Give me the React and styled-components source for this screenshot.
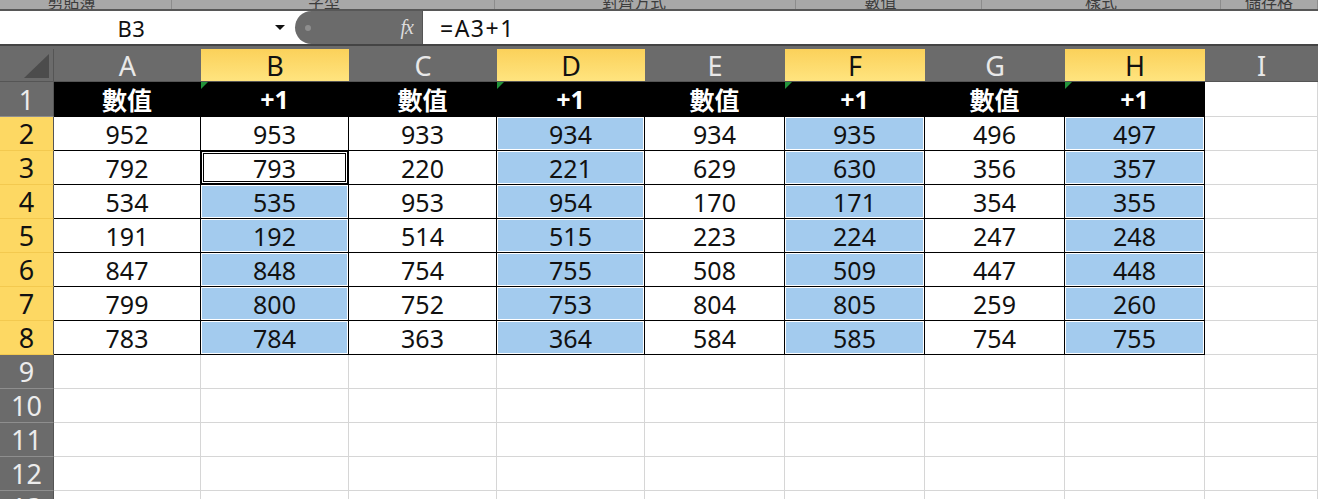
import React from "react";
import styled, { createGlobalStyle, css } from "styled-components";

const GlobalStyle = createGlobalStyle`
  html, body {
    margin: 0;
    padding: 0;
    background: #fff;
  }
  body {
    font-family: "Noto Sans", "Noto Sans CJK TC", sans-serif;
    overflow: hidden;
  }
`;

const Window = styled.div`
  width: 1318px;
  height: 499px;
  overflow: hidden;
  display: flex;
  flex-direction: column;
  background: #6b6b6b;
`;

const Ribbon = styled.div`
  display: flex;
  flex: none;
  height: 9px;
  background: #a8a8a8;
  border-bottom: 2px solid #575757;
  overflow: hidden;
`;

const RibbonGroup = styled.div`
  flex: none;
  width: ${p => p.$w}px;
  box-sizing: border-box;
  display: flex;
  justify-content: center;
  padding-right: ${p => p.$shift || 0}px;
  border-right: 1px solid #8c8c8c;
  overflow: hidden;
`;

const RibbonLabel = styled.span`
  font-family: "Noto Sans CJK TC", sans-serif;
  font-size: 16px;
  line-height: 20px;
  margin-top: -9px;
  color: #3c3c3c;
  white-space: nowrap;
`;

const FormulaBar = styled.div`
  display: flex;
  flex: none;
  height: 33px;
  background: #fff;
  border-bottom: 2px solid #444;
`;

const NameBox = styled.div`
  flex: none;
  width: 295px;
  display: flex;
  align-items: center;
  font-size: 22px;
  color: #111;
`;

const NameText = styled.span`
  flex: 1;
  text-align: center;
  padding-right: 12px;
  letter-spacing: 0.5px;
`;

const DropArrow = styled.span`
  width: 0;
  height: 0;
  border-left: 5px solid transparent;
  border-right: 5px solid transparent;
  border-top: 5px solid #111;
  margin-right: 10px;
`;

const FxPill = styled.div`
  flex: none;
  width: 128px;
  box-sizing: border-box;
  display: flex;
  align-items: center;
  justify-content: space-between;
  padding: 0 9px 0 10px;
  background: #6b6b6b;
  border-radius: 17px 0 0 17px;
  border-right: 1px solid #555;
`;

const Grip = styled.span`
  width: 6px;
  height: 6px;
  border-radius: 50%;
  background: #8e8e8e;
`;

const FxLabel = styled.span`
  font-family: "Liberation Serif", serif;
  font-style: italic;
  font-size: 20px;
  color: #dcdcdc;
  letter-spacing: -1px;
`;

const FormulaInput = styled.div`
  flex: 1;
  display: flex;
  align-items: center;
  padding-left: 17px;
  font-size: 23px;
  letter-spacing: 1.5px;
  color: #111;
`;

const HeaderGap = styled.div`
  flex: none;
  height: 3px;
  background: #6b6b6b;
`;

const Sheet = styled.div`
  flex: none;
  display: grid;
  grid-template-columns: 54px 147px 148px 148px 148px 140px 140px 140px 140px 1fr;
  grid-template-rows: 33px 35px repeat(12, 34px);
  background: #fff;
`;

const Corner = styled.div`
  background: #6b6b6b;
  border-right: 1px solid #555;
  border-bottom: 1px solid #555;
  box-sizing: border-box;
  display: flex;
  align-items: flex-end;
  justify-content: flex-end;
  padding: 0 4px 3px 0;
`;

const ColHead = styled.div`
  display: flex;
  align-items: center;
  justify-content: center;
  box-sizing: border-box;
  font-size: 27px;
  border-bottom: 1px solid #555;
  ${p => p.$sel
    ? css`
        background: linear-gradient(#fbd15a, #ffe47f);
        color: #111;
      `
    : css`
        background: #6b6b6b;
        color: #e8e8e8;
      `}
`;

const RowHead = styled.div`
  display: flex;
  align-items: center;
  justify-content: center;
  box-sizing: border-box;
  font-size: 27px;
  border-right: 1px solid #555;
  ${p => p.$sel
    ? css`
        background: #fdd863;
        color: #111;
        border-bottom: 1px solid #f3c94f;
      `
    : css`
        background: #6b6b6b;
        color: #ececec;
        border-bottom: 1px solid #8e8e8e;
      `}
`;

const Cell = styled.div`
  position: relative;
  display: flex;
  align-items: center;
  justify-content: center;
  box-sizing: border-box;
  font-size: 25px;
  color: #111;
  background: #fff;
  border-right: 1px solid ${p => (p.$boxed ? "#000" : "#d6d6d6")};
  border-bottom: 1px solid ${p => (p.$boxed ? "#000" : "#d6d6d6")};
  ${p => p.$variant === "title" && css`
    background: #000;
    color: #fff;
    font-weight: 700;
  `}
  ${p => p.$variant === "blue" && css`
    background: #a3cbee;
    box-shadow: inset 0 0 0 1px #fff;
  `}
  ${p => p.$variant === "active" && css`
    box-shadow: inset 0 0 0 1px #000, inset 0 0 0 2px #fff, inset 0 0 0 3px #000;
  `}
  ${p => p.$flag && css`
    &::before {
      content: "";
      position: absolute;
      top: 0;
      left: 0;
      border-top: 7px solid #22923a;
      border-right: 7px solid transparent;
    }
  `}
`;

const ribbonGroups = [
  { label: "剪貼簿", w: 172, shift: 28 },
  { label: "字型", w: 323, shift: 18 },
  { label: "對齊方式", w: 301, shift: 22 },
  { label: "數值", w: 186, shift: 16 },
  { label: "樣式", w: 239, shift: 0 },
  { label: "儲存格", w: 97, shift: 0 },
];

const columns = ["A", "B", "C", "D", "E", "F", "G", "H", "I"];

const data = [
  [952, 953, 933, 934, 934, 935, 496, 497],
  [792, 793, 220, 221, 629, 630, 356, 357],
  [534, 535, 953, 954, 170, 171, 354, 355],
  [191, 192, 514, 515, 223, 224, 247, 248],
  [847, 848, 754, 755, 508, 509, 447, 448],
  [799, 800, 752, 753, 804, 805, 259, 260],
  [783, 784, 363, 364, 584, 585, 754, 755],
];

const cellVariant = (r, c) => {
  if (c % 2 === 0) return "plain";
  if (c === 1 && r === 0) return "plain";
  if (c === 1 && r === 1) return "active";
  return "blue";
};

export default function App() {
  return (
    <>
      <GlobalStyle />
      <Window>
        <Ribbon>
          {ribbonGroups.map(g => (
            <RibbonGroup key={g.label} $w={g.w} $shift={g.shift}>
              <RibbonLabel>{g.label}</RibbonLabel>
            </RibbonGroup>
          ))}
        </Ribbon>

        <FormulaBar>
          <NameBox>
            <NameText>B3</NameText>
            <DropArrow />
          </NameBox>
          <FxPill>
            <Grip />
            <FxLabel>fx</FxLabel>
          </FxPill>
          <FormulaInput>=A3+1</FormulaInput>
        </FormulaBar>

        <HeaderGap />

        <Sheet>
          <Corner>
            <svg width="25" height="24" viewBox="0 0 25 24">
              <polygon points="25,0 25,24 0,24" fill="#4c4c4c" />
            </svg>
          </Corner>
          {columns.map((c, i) => (
            <ColHead key={c} $sel={i % 2 === 1 && i < 8}>{c}</ColHead>
          ))}

          <RowHead>1</RowHead>
          {columns.map((c, i) =>
            i < 8 ? (
              <Cell key={c} $boxed $variant="title" $flag={i % 2 === 1}>
                {i % 2 === 0 ? "數值" : "+1"}
              </Cell>
            ) : (
              <Cell key={c} />
            )
          )}

          {data.map((row, r) => (
            <React.Fragment key={r}>
              <RowHead $sel>{r + 2}</RowHead>
              {row.map((v, c) => (
                <Cell key={c} $boxed $variant={cellVariant(r, c)}>{v}</Cell>
              ))}
              <Cell />
            </React.Fragment>
          ))}

          {[9, 10, 11, 12, 13].map(n => (
            <React.Fragment key={n}>
              <RowHead>{n}</RowHead>
              {columns.map(c => (
                <Cell key={c} />
              ))}
            </React.Fragment>
          ))}
        </Sheet>
      </Window>
    </>
  );
}
